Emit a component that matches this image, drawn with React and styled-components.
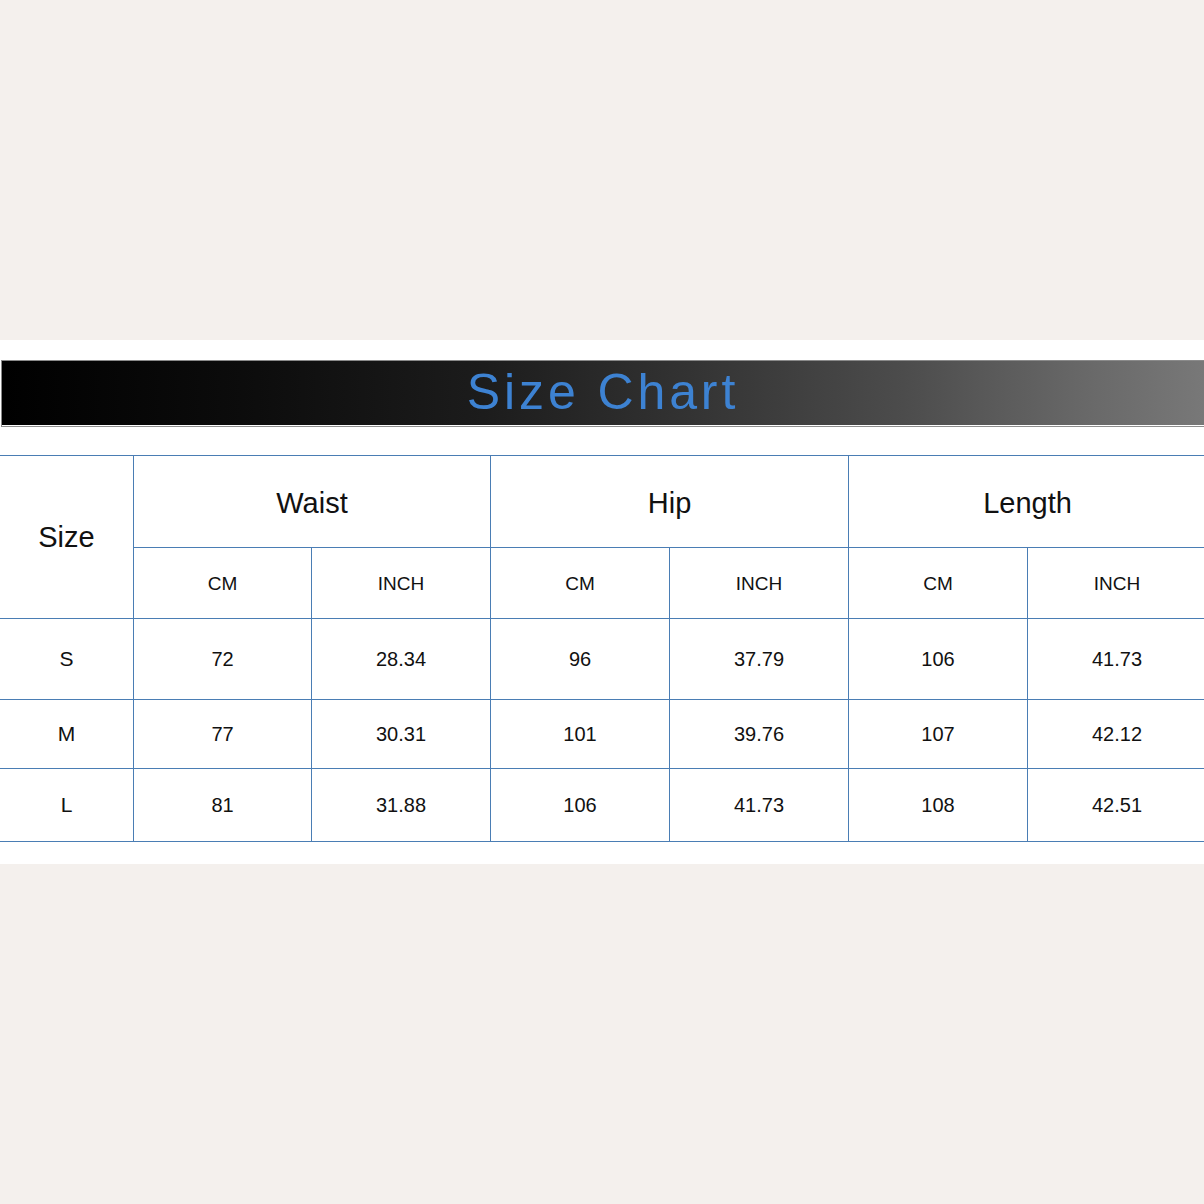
import React from "react"
import styled, { createGlobalStyle } from "styled-components"

const groups = ["Waist", "Hip", "Length"]
const colWidths = [134, 178, 179, 179, 179, 179, 179]

const rows = [
  { size: "S", values: ["72", "28.34", "96", "37.79", "106", "41.73"], height: 81 },
  { size: "M", values: ["77", "30.31", "101", "39.76", "107", "42.12"], height: 69 },
  { size: "L", values: ["81", "31.88", "106", "41.73", "108", "42.51"], height: 73 },
]

function App() {
  return (
    <>
      <GlobalStyle />
      <Page>
        <Panel>
          <Banner>
            <BannerBar>
              <Title>Size Chart</Title>
            </BannerBar>
          </Banner>
          <Chart>
            <colgroup>
              {colWidths.map((w, i) => (
                <col key={i} style={{ width: w }} />
              ))}
            </colgroup>
            <thead>
              <tr style={{ height: 92 }}>
                <HeadCell rowSpan={2}>Size</HeadCell>
                {groups.map((g) => (
                  <HeadCell key={g} colSpan={2} $lift>
                    {g}
                  </HeadCell>
                ))}
              </tr>
              <tr style={{ height: 71 }}>
                {groups.map((g) => (
                  <React.Fragment key={g}>
                    <UnitCell>CM</UnitCell>
                    <UnitCell>INCH</UnitCell>
                  </React.Fragment>
                ))}
              </tr>
            </thead>
            <tbody>
              {rows.map((r) => (
                <tr key={r.size} style={{ height: r.height }}>
                  <SizeCell>{r.size}</SizeCell>
                  {r.values.map((v, i) => (
                    <Cell key={i}>{v}</Cell>
                  ))}
                </tr>
              ))}
            </tbody>
          </Chart>
        </Panel>
      </Page>
    </>
  )
}

export default App

const GlobalStyle = createGlobalStyle`
  html, body {
    margin: 0;
    padding: 0;
    background: #f4f0ed;
  }
  body {
    font-family: "Liberation Sans", Arial, sans-serif;
  }
`

const Page = styled.div`
  width: 1204px;
  height: 1204px;
  padding-top: 340px;
  box-sizing: border-box;
  background: #f4f0ed;
  overflow: hidden;
`

const Panel = styled.div`
  background: #ffffff;
  padding: 20px 0 22px;
  overflow: hidden;
`

const Banner = styled.div`
  margin-left: 1px;
  border-top: 1px solid #8a8a8a;
  border-left: 1px solid #8a8a8a;
  border-bottom: 1px solid #8e8e8e;
  padding-bottom: 1px;
`

const BannerBar = styled.div`
  height: 64px;
  display: flex;
  align-items: center;
  justify-content: center;
  background: linear-gradient(
    to right,
    #000000 0%,
    #0c0c0c 20%,
    #1c1c1c 40%,
    #303030 55%,
    #4c4c4c 75%,
    #686868 90%,
    #787878 100%
  );
`

const Title = styled.h1`
  margin: 0 0 2px 0;
  font-family: "Liberation Sans", Arial, sans-serif;
  font-weight: 400;
  font-size: 50px;
  letter-spacing: 3.9px;
  color: #3d82d2;
  line-height: 1;
`

const Chart = styled.table`
  margin-top: 28px;
  margin-left: -1px;
  width: 1207px;
  table-layout: fixed;
  border-collapse: collapse;
  color: #111111;
  font-family: "Liberation Sans", Arial, sans-serif;

  td,
  th {
    border: 1px solid #4a7db4;
    text-align: center;
    vertical-align: middle;
    padding: 0;
  }
`

const HeadCell = styled.th`
  font-weight: 400;
  font-size: 29px;
  padding-top: ${(p) => (p.$lift ? "3px" : "0")} !important;
`

const UnitCell = styled.th`
  font-weight: 400;
  font-size: 19px;
  padding-top: 1px !important;
`

const SizeCell = styled.td`
  font-size: 21px;
`

const Cell = styled.td`
  font-size: 20px;
  padding-top: 1px !important;
`
